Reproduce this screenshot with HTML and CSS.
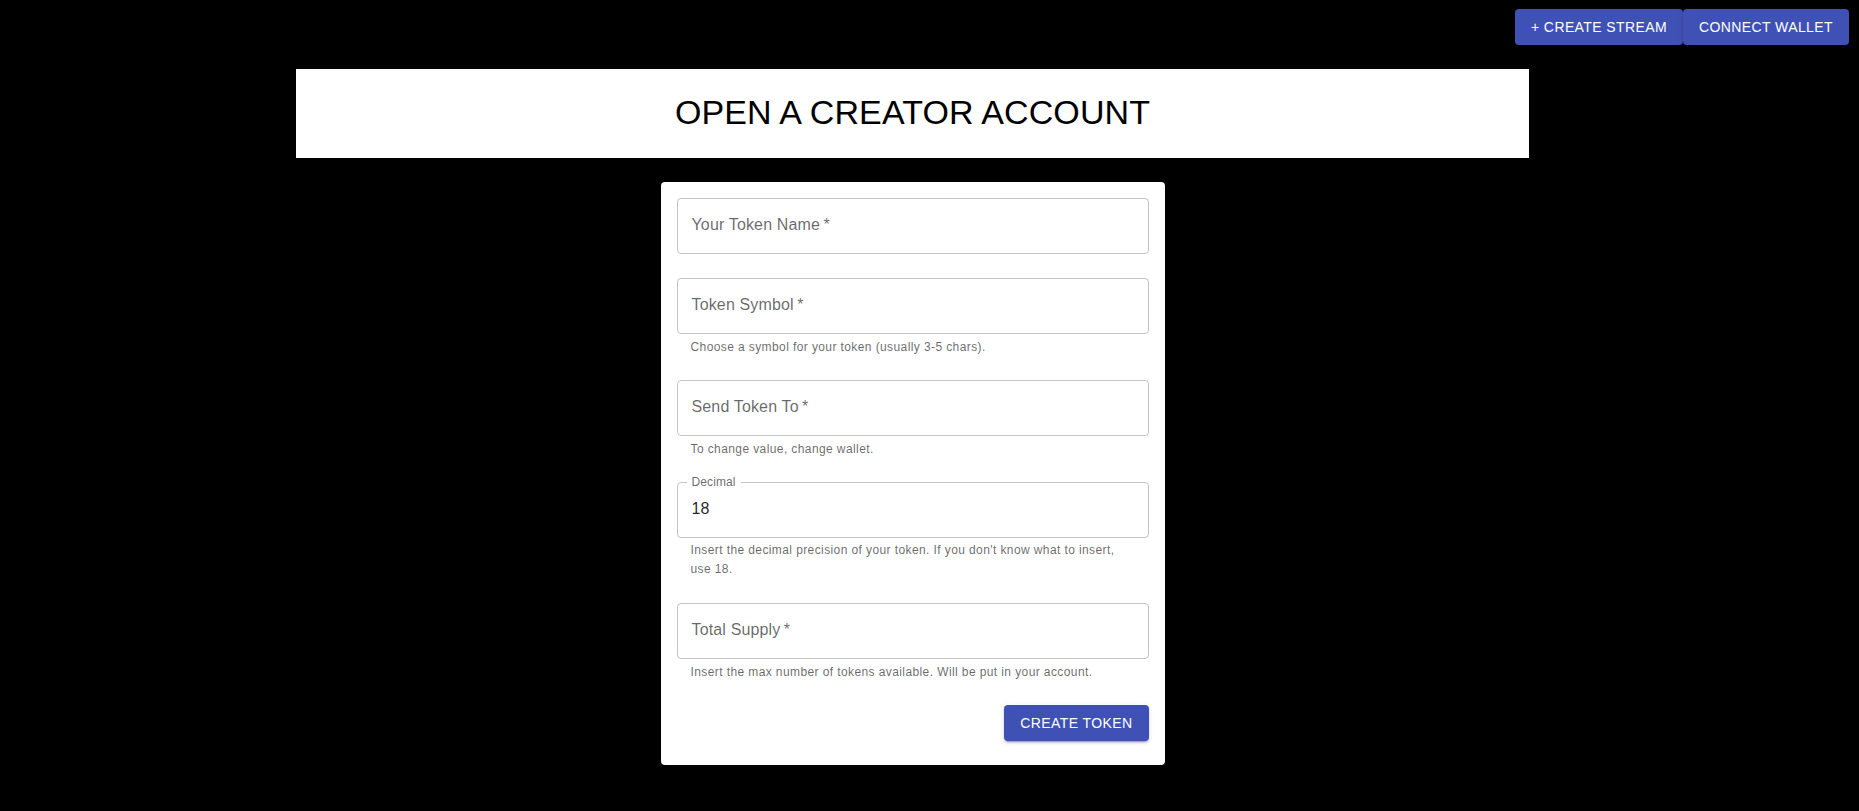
FILE: index.html
```html
<!DOCTYPE html>
<html lang="en">
<head>
<meta charset="utf-8">
<title>Open a Creator Account</title>
<link rel="stylesheet" href="styles.css">
</head>
<body>
  <header class="topbar">
    <button class="btn">+ Create Stream</button>
    <button class="btn">Connect Wallet</button>
  </header>
  <main class="main">
    <div class="banner">
      <h1 class="title">OPEN A CREATOR ACCOUNT</h1>
    </div>
    <form class="card">
      <div class="group">
        <div class="field"><span class="placeholder">Your Token Name&thinsp;*</span></div>
      </div>
      <div class="group">
        <div class="field"><span class="placeholder">Token Symbol&thinsp;*</span></div>
        <p class="helper">Choose a symbol for your token (usually 3-5 chars).</p>
      </div>
      <div class="group">
        <div class="field"><span class="placeholder">Send Token To&thinsp;*</span></div>
        <p class="helper">To change value, change wallet.</p>
      </div>
      <div class="group decimal">
        <div class="field filled">
          <span class="float-label">Decimal</span>
          <span class="value">18</span>
        </div>
        <p class="helper two-line">Insert the decimal precision of your token. If you don't know what to insert, use 18.</p>
      </div>
      <div class="group">
        <div class="field"><span class="placeholder">Total Supply&thinsp;*</span></div>
        <p class="helper">Insert the max number of tokens available. Will be put in your account.</p>
      </div>
      <div class="actions">
        <button class="btn" type="button">Create Token</button>
      </div>
    </form>
  </main>
</body>
</html>
```

FILE: styles.css
```css
* {
  box-sizing: border-box;
}

html, body {
  margin: 0;
  padding: 0;
  background: #000;
  font-family: "Liberation Sans", Arial, Helvetica, sans-serif;
}

body {
  min-height: 811px;
}

.topbar {
  display: flex;
  justify-content: flex-end;
  padding: 9px 10px 0 0;
}

.btn {
  display: inline-flex;
  align-items: center;
  justify-content: center;
  margin: 0;
  border: 0;
  border-radius: 4px;
  background: #3f51b5;
  color: #fff;
  font-family: "Liberation Sans", Arial, Helvetica, sans-serif;
  font-size: 14px;
  font-weight: 400;
  line-height: 24px;
  letter-spacing: 0.4px;
  text-transform: uppercase;
  padding: 6px 16px;
  cursor: pointer;
  box-shadow: 0 3px 1px -2px rgba(0,0,0,0.2), 0 2px 2px 0 rgba(0,0,0,0.14), 0 1px 5px 0 rgba(0,0,0,0.12);
}

.main {
  display: flex;
  flex-direction: column;
  align-items: center;
  padding: 24px 34px 0 0;
}

.banner {
  width: 1233px;
  height: 89px;
  background: #fff;
  display: flex;
  align-items: center;
  justify-content: center;
  padding-bottom: 4px;
}

.title {
  margin: 0;
  font-size: 34px;
  font-weight: 400;
  line-height: 42px;
  letter-spacing: 0.1px;
  color: #000;
}

.card {
  margin-top: 24px;
  width: 504px;
  background: #fff;
  border-radius: 4px;
  padding: 16px 16px 24px;
  display: flex;
  flex-direction: column;
}

.group {
  margin-bottom: 23px;
}

.group:first-child {
  margin-bottom: 24px;
}

.group.decimal {
  margin-bottom: 24px;
}

.field {
  position: relative;
  height: 56px;
  border: 1px solid rgba(0,0,0,0.23);
  border-radius: 4px;
  padding: 0 14px;
  display: flex;
  align-items: center;
}

.placeholder {
  font-size: 16px;
  letter-spacing: 0.15px;
  color: rgba(0,0,0,0.6);
  margin-top: -2px;
}

.value {
  font-size: 16px;
  letter-spacing: 0.15px;
  color: rgba(0,0,0,0.87);
  margin-top: -3px;
}

.float-label {
  position: absolute;
  left: 9px;
  top: -9px;
  padding: 0 5px;
  background: #fff;
  font-size: 12px;
  line-height: 16px;
  letter-spacing: 0.1px;
  color: rgba(0,0,0,0.6);
}

.helper {
  margin: 3px 14px 0;
  font-size: 12px;
  line-height: 20px;
  letter-spacing: 0.4px;
  color: rgba(0,0,0,0.6);
}

.helper.two-line {
  line-height: 19px;
}

.actions {
  display: flex;
  justify-content: flex-end;
}
```
